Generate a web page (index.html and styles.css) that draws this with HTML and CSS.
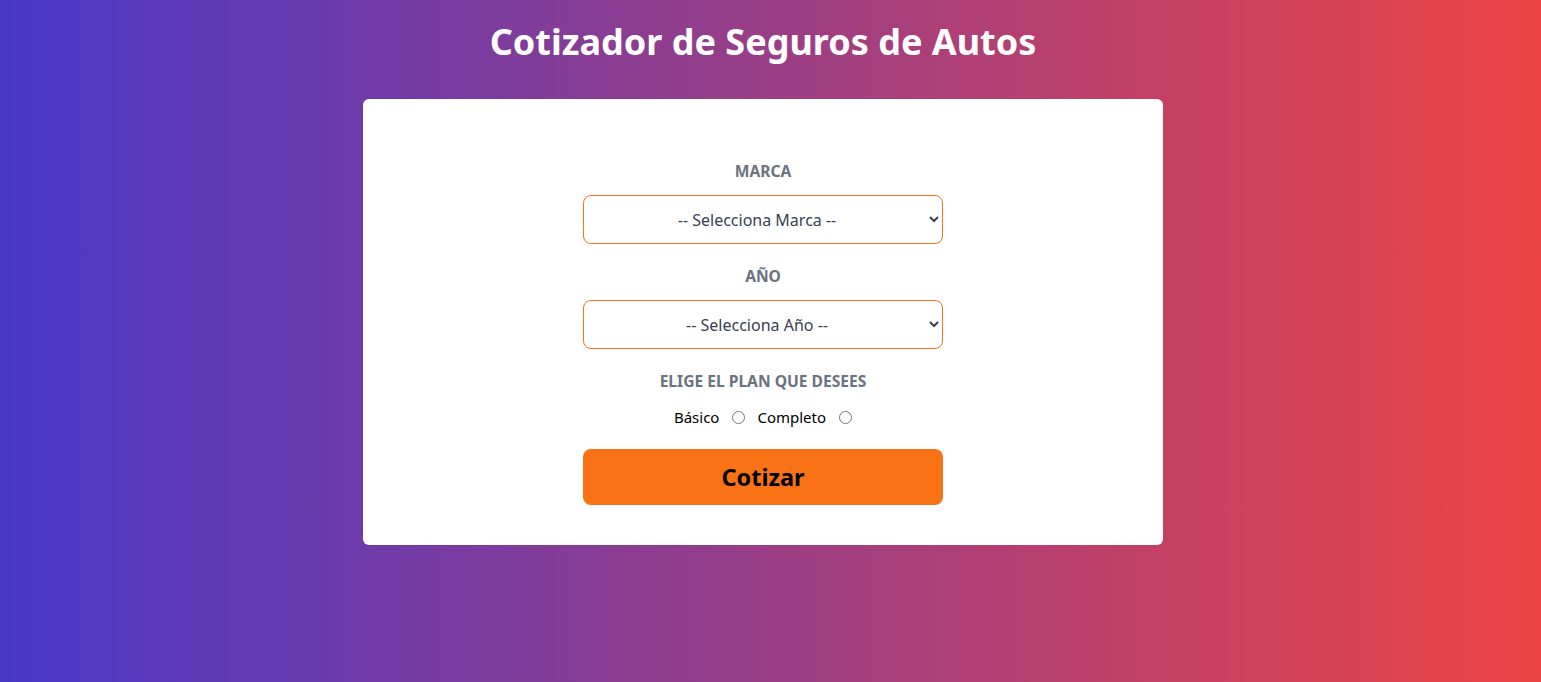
FILE: index.html
```html
<!DOCTYPE html>
<html lang="es">
<head>
<meta charset="utf-8">
<title>Cotizador de Seguros de Autos</title>
<link rel="stylesheet" href="styles.css">
</head>
<body>
<div class="page">
  <header class="header">
    <h1 class="title">Cotizador de Seguros de Autos</h1>
  </header>
  <main class="card">
    <form class="form">
      <div class="field">
        <label class="label" for="marca">Marca</label>
        <select id="marca" class="select">
          <option>-- Selecciona Marca --</option>
        </select>
      </div>
      <div class="field">
        <label class="label" for="year">Año</label>
        <select id="year" class="select">
          <option>-- Selecciona Año --</option>
        </select>
      </div>
      <div class="field">
        <span class="label">Elige el plan que desees</span>
        <div class="radios">
          <label class="radio-label" for="basico">Básico</label>
          <input class="radio" type="radio" id="basico" name="plan">
          <label class="radio-label" for="completo">Completo</label>
          <input class="radio" type="radio" id="completo" name="plan">
        </div>
      </div>
      <button type="button" class="button">Cotizar</button>
    </form>
  </main>
</div>
</body>
</html>
```

FILE: styles.css
```css
* { box-sizing: border-box; }
html, body { margin: 0; padding: 0; height: 100%; }
body {
  font-family: "Noto Sans", "Open Sans", sans-serif;
  background: linear-gradient(to right, #4838c8, #ec4444);
  min-height: 682px;
}
.page {
  margin-right: 15px;
  padding-top: 20px;
}
.header { margin: 0; }
.title {
  margin: 0;
  text-align: center;
  color: #fff;
  font-size: 36px;
  line-height: 44px;
  font-weight: 700;
}
.card {
  width: 800px;
  margin: 35px auto 0;
  background: #fff;
  border-radius: 6px;
  padding: 40px 0;
}
.form {
  width: 360px;
  margin: 0 auto;
}
.field {
  margin: 20px 0;
  display: flex;
  flex-direction: column;
  align-items: center;
}
.label {
  display: block;
  color: #6b7280;
  font-weight: 700;
  font-size: 15.6px;
  line-height: 24px;
  text-transform: uppercase;
  text-align: center;
}
.select {
  margin-top: 12px;
  width: 100%;
  height: 49px;
  border: 1px solid #f97316;
  border-radius: 8px;
  background: #fff;
  color: #374151;
  font-family: inherit;
  font-size: 16px;
  text-align: center;
  text-align-last: center;
  padding: 0 8px;
}
.radios {
  margin-top: 12px;
  display: flex;
  align-items: center;
  justify-content: center;
  height: 24px;
  font-size: 15px;
  color: #000;
}
.radio { width: 13px; height: 13px; margin: 0 12px 0 13px; }
.radio:last-child { margin-right: 0; }
.button {
  display: block;
  width: 100%;
  height: 56px;
  background: #f97316;
  border: none;
  border-radius: 8px;
  color: #000;
  font-family: inherit;
  font-weight: 700;
  font-size: 23.5px;
  cursor: pointer;
}
```
